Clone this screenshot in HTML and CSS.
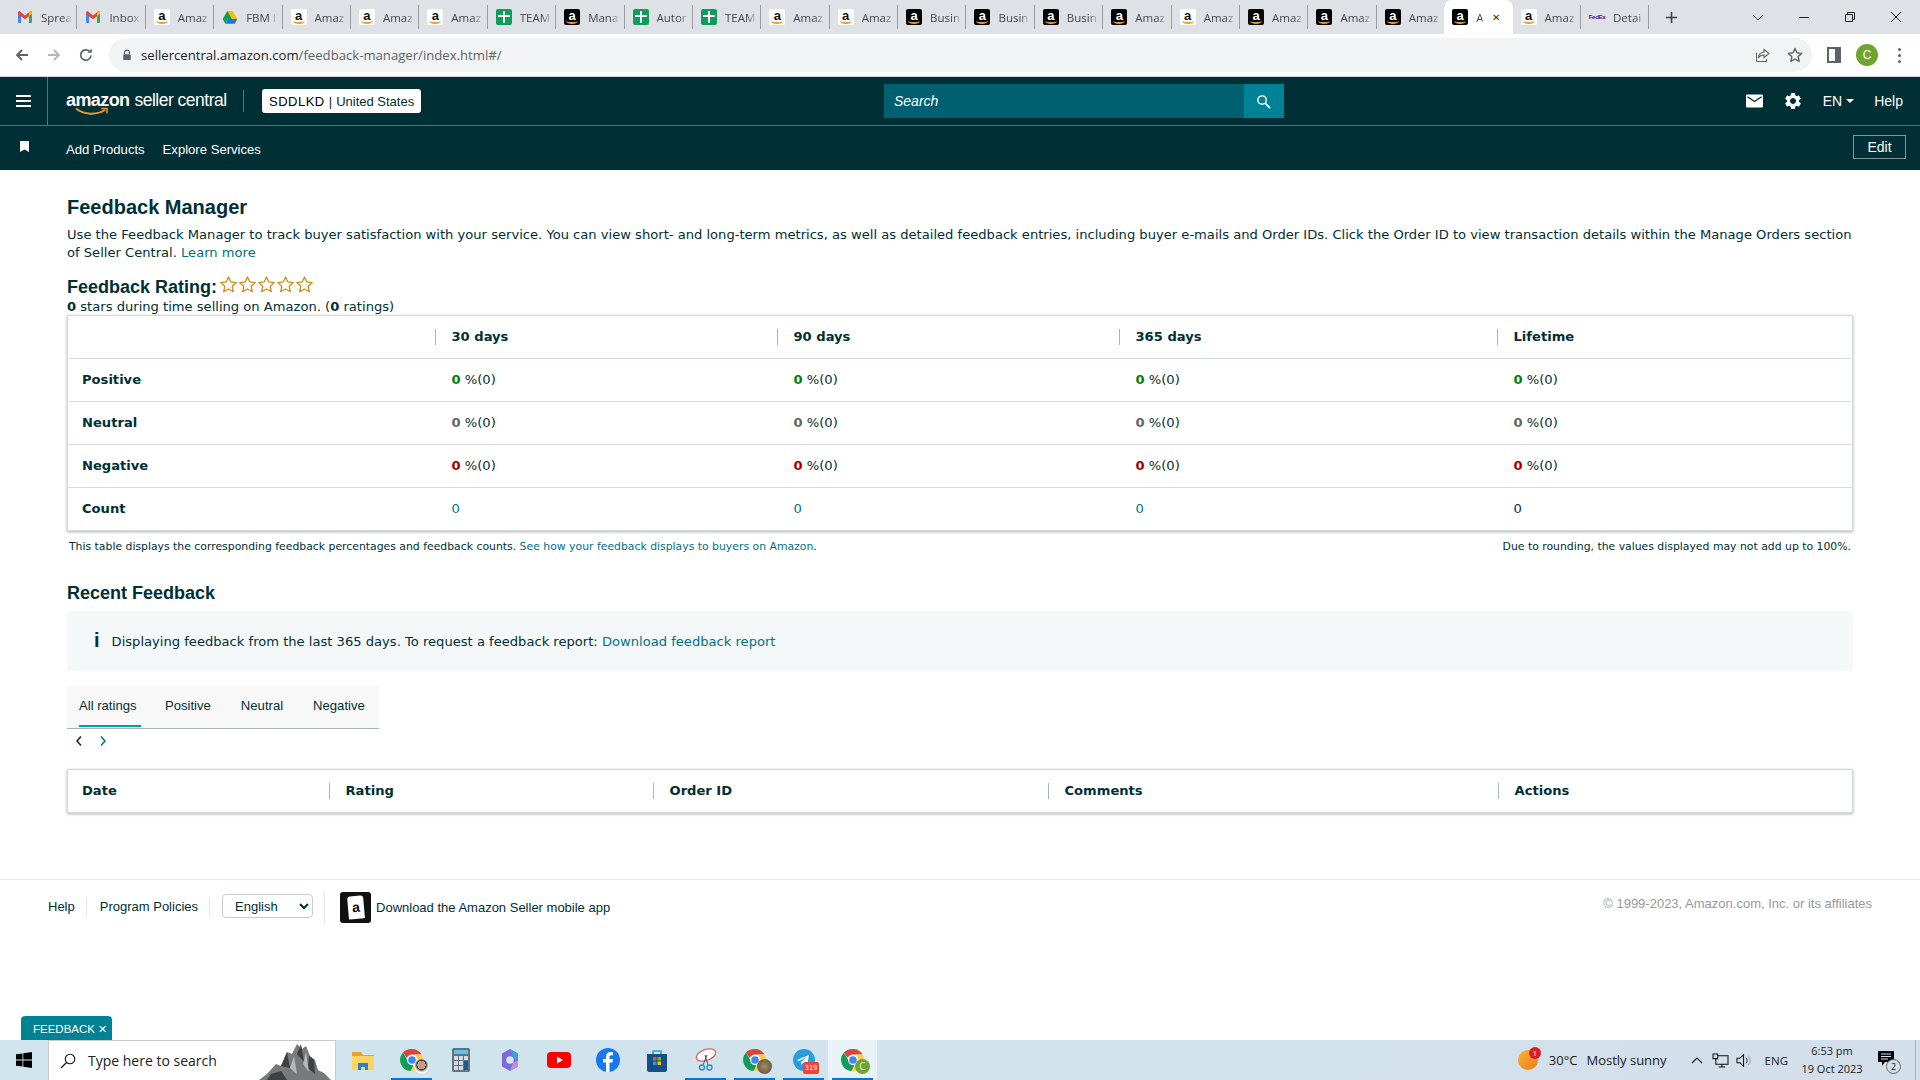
FILE: index.html
```html
<!DOCTYPE html>
<html lang="en">
<head>
  <meta charset="UTF-8">
  <title>Feedback Manager</title>
  <link rel="stylesheet" href="styles.css">
</head>
<body>
  <svg class="sprite" xmlns="http://www.w3.org/2000/svg">
    <symbol id="star" viewBox="0 0 24 24"><path d="M12 2.5l2.9 6.3 6.9.8-5.1 4.7 1.4 6.8-6.1-3.4-6.1 3.4 1.4-6.8-5.1-4.7 6.9-.8z" fill="#fff" stroke="#d08a14" stroke-width="1.6" stroke-linejoin="round"/></symbol>
    <symbol id="gear" viewBox="0 0 24 24"><path fill="#fff" d="M19.14 12.94c.04-.3.06-.61.06-.94 0-.32-.02-.64-.07-.94l2.03-1.58a.49.49 0 0 0 .12-.61l-1.92-3.32a.488.488 0 0 0-.59-.22l-2.39.96c-.5-.38-1.03-.7-1.62-.94l-.36-2.54a.484.484 0 0 0-.48-.41h-3.84c-.24 0-.43.17-.47.41l-.36 2.54c-.59.24-1.13.57-1.62.94l-2.39-.96c-.22-.08-.47 0-.59.22L2.74 8.87c-.12.21-.08.47.12.61l2.03 1.58c-.05.3-.09.63-.09.94s.02.64.07.94l-2.03 1.58a.49.49 0 0 0-.12.61l1.92 3.32c.12.22.37.29.59.22l2.39-.96c.5.38 1.03.7 1.62.94l.36 2.54c.05.24.24.41.48.41h3.84c.24 0 .44-.17.47-.41l.36-2.54c.59-.24 1.13-.56 1.62-.94l2.39.96c.22.08.47 0 .59-.22l1.92-3.32c.12-.22.07-.47-.12-.61l-2.01-1.58zM12 15.6c-1.98 0-3.6-1.62-3.6-3.6s1.62-3.6 3.6-3.6 3.6 1.62 3.6 3.6-1.62 3.6-3.6 3.6z"/></symbol>
    <symbol id="chrome" viewBox="0 0 24 24">
      <path fill="#db4437" d="M12 1a11 11 0 0 1 9.5 5.5H12A5.5 5.5 0 0 0 6.8 10L3 4.6A11 11 0 0 1 12 1z"/>
      <path fill="#0f9d58" d="M3 4.6L7.7 13a5.5 5.5 0 0 0 5.8 4.3L10.600 23A11 11 0 0 1 3 4.600z"/>
      <path fill="#ffcd40" d="M21.500 6.500A11 11 0 0 1 10.600 23l4.200-6.300A5.500 5.500 0 0 0 16.500 9.200 5 5 0 0 0 15 6.500z"/>
      <circle cx="12" cy="12" r="4.400" fill="#4285f4" stroke="#fff" stroke-width="1.200"/>
    </symbol>
    <symbol id="gmail" viewBox="0 0 16 16">
      <path fill="#4285f4" d="M1 3.500h3V14H2a1 1 0 0 1-1-1z"/>
      <path fill="#34a853" d="M12 3.500h3V13a1 1 0 0 1-1 1h-2z"/>
      <path fill="#ea4335" d="M1 3.500c0-1 1-1.500 2-1l5 4 5-4c1-.5 2 0 2 1v1.500l-7 5.200L1 5z"/>
      <path fill="#fbbc04" d="M12 3.700l1-.9c1-.6 2-.2 2 .9V5l-3 2.300z"/>
    </symbol>
  </svg>

  <div class="tabstrip">
    <div class="tab"><svg class="fav"><use href="#gmail"/></svg><span class="tab-title">Sprea</span></div>
    <div class="tab"><svg class="fav"><use href="#gmail"/></svg><span class="tab-title">Inbox</span></div>
    <div class="tab"><span class="fav fav-amz">a</span><span class="tab-title">Amaz</span></div>
    <div class="tab">
      <svg class="fav" viewBox="0 0 24 24"><path fill="#fbbc04" d="M8 3h8l7 12h-8z"/><path fill="#1a73e8" d="M23 15l-4 7H5l4-7z"/><path fill="#0f9d58" d="M8 3l7 12-6 0-4 7-4-7z"/></svg>
      <span class="tab-title">FBM I</span>
    </div>
    <div class="tab"><span class="fav fav-amz">a</span><span class="tab-title">Amaz</span></div>
    <div class="tab"><span class="fav fav-amz">a</span><span class="tab-title">Amaz</span></div>
    <div class="tab"><span class="fav fav-amz">a</span><span class="tab-title">Amaz</span></div>
    <div class="tab"><span class="fav fav-team"></span><span class="tab-title">TEAM</span></div>
    <div class="tab"><span class="fav fav-amz-dark">a</span><span class="tab-title">Mana</span></div>
    <div class="tab"><span class="fav fav-team"></span><span class="tab-title">Autor</span></div>
    <div class="tab"><span class="fav fav-team"></span><span class="tab-title">TEAM</span></div>
    <div class="tab"><span class="fav fav-amz">a</span><span class="tab-title">Amaz</span></div>
    <div class="tab"><span class="fav fav-amz">a</span><span class="tab-title">Amaz</span></div>
    <div class="tab"><span class="fav fav-amz-dark">a</span><span class="tab-title">Busin</span></div>
    <div class="tab"><span class="fav fav-amz-dark">a</span><span class="tab-title">Busin</span></div>
    <div class="tab"><span class="fav fav-amz-dark">a</span><span class="tab-title">Busin</span></div>
    <div class="tab"><span class="fav fav-amz-dark">a</span><span class="tab-title">Amaz</span></div>
    <div class="tab"><span class="fav fav-amz">a</span><span class="tab-title">Amaz</span></div>
    <div class="tab"><span class="fav fav-amz-dark">a</span><span class="tab-title">Amaz</span></div>
    <div class="tab"><span class="fav fav-amz-dark">a</span><span class="tab-title">Amaz</span></div>
    <div class="tab"><span class="fav fav-amz-dark">a</span><span class="tab-title">Amaz</span></div>
    <div class="tab tab-active"><span class="fav fav-amz-dark">a</span><span class="tab-title">A</span><span class="tab-close">✕</span></div>
    <div class="tab"><span class="fav fav-amz">a</span><span class="tab-title">Amaz</span></div>
    <div class="tab"><span class="fav fav-fedex">FedEx</span><span class="tab-title">Detai</span></div>
    <svg class="newtab" viewBox="0 0 14 14"><path d="M7 1v12M1 7h12" stroke="#3c4043" stroke-width="1.700"/></svg>
    <div class="winctl">
      <svg viewBox="0 0 12 12"><path d="M1 4l5 5 5-5" fill="none" stroke="#444" stroke-width="1"/></svg>
      <svg viewBox="0 0 12 12"><path d="M1 6.500h10" stroke="#222" stroke-width="1"/></svg>
      <svg viewBox="0 0 12 12"><path d="M1.500 3.500h7v7h-7zM3.500 3.500v-2h7v7h-2" fill="none" stroke="#222" stroke-width="1"/></svg>
      <svg viewBox="0 0 12 12"><path d="M1 1l10 10M11 1L1 11" stroke="#222" stroke-width="1"/></svg>
    </div>
  </div>

  <div class="toolbar">
    <svg class="tool" viewBox="0 0 16 16"><path d="M14 8H3M8 3L3 8l5 5" fill="none" stroke="#5f6368" stroke-width="1.800"/></svg>
    <svg class="tool" viewBox="0 0 16 16"><path d="M2 8h11M8 3l5 5-5 5" fill="none" stroke="#b4b7bb" stroke-width="1.800"/></svg>
    <svg class="tool" viewBox="0 0 16 16"><path d="M13 8.500A5.200 5.200 0 1 1 11.500 4.300" fill="none" stroke="#5f6368" stroke-width="1.700"/><path d="M9.500 5.700h4.300V1.400z" fill="#5f6368"/></svg>
    <div class="omnibox">
      <svg class="lock" viewBox="0 0 12 14"><path d="M3 6V4.200a3 3 0 0 1 6 0V6" fill="none" stroke="#5f6368" stroke-width="1.400"/><rect x="1.500" y="6" width="9" height="7" rx="1" fill="#5f6368"/></svg>
      <span class="url">sellercentral.amazon.com<span class="url-path">/feedback-manager/index.html#/</span></span>
      <span class="omni-icons">
        <svg viewBox="0 0 16 16"><path d="M9 2.500l5 4-5 4V8C6 8 4.500 9 3.300 11 3.500 7.500 5.500 5.500 9 5z" fill="none" stroke="#5f6368" stroke-width="1.100"/><path d="M1.500 6v8.500h10V12" fill="none" stroke="#5f6368" stroke-width="1"/></svg>
        <svg viewBox="0 0 16 16"><path d="M8 1.500l2 4.300 4.600.6-3.400 3.200.9 4.700L8 12l-4.100 2.300.9-4.700L1.400 6.400 6 5.800z" fill="none" stroke="#5f6368" stroke-width="1.400" stroke-linejoin="round"/></svg>
      </span>
    </div>
    <span class="panel-icon"></span>
    <span class="avatar">C</span>
    <span class="kebab"><i></i><i></i><i></i></span>
  </div>

  <header class="sc-header">
    <div class="burger"><i></i><i></i><i></i></div>
    <div class="logo">
      <span class="logo-amazon">amazon</span><span class="logo-seller">seller central</span>
      <svg class="logo-smile" viewBox="0 0 34 9"><path d="M1 1.500C9 8 22 8.500 31 3" fill="none" stroke="#f29a2e" stroke-width="2"/><path d="M27 1.500h6v5" fill="none" stroke="#f29a2e" stroke-width="1.500"/></svg>
    </div>
    <div class="account"><b>SDDLKD</b><span class="account-sep">|</span>United States</div>
    <div class="search">
      <span class="search-input">Search</span>
      <span class="search-btn"><svg viewBox="0 0 16 16"><circle cx="6.500" cy="6.500" r="4.500" fill="none" stroke="#fff" stroke-width="1.500"/><path d="M10 10l5 5" stroke="#fff" stroke-width="1.800"/></svg></span>
    </div>
    <div class="header-right">
      <svg class="mail" viewBox="0 0 18 14"><rect width="18" height="14" rx="1.500" fill="#fff"/><path d="M1.500 2.500L9 7.500l7.500-5" fill="none" stroke="#002f36" stroke-width="1.500"/></svg>
      <svg class="gear"><use href="#gear"/></svg>
      <span class="lang">EN<i class="caret"></i></span>
      <span>Help</span>
    </div>
  </header>

  <nav class="sc-nav">
    <svg class="bookmark" viewBox="0 0 9 11"><path d="M0 0h9v11L4.500 8.500 0 11z" fill="#fff"/></svg>
    <a class="nav-link">Add Products</a>
    <a class="nav-link">Explore Services</a>
    <span class="edit-btn">Edit</span>
  </nav>

  <main class="content">
    <h1 class="page-title">Feedback Manager</h1>
    <p class="intro">Use the Feedback Manager to track buyer satisfaction with your service. You can view short- and long-term metrics, as well as detailed feedback entries, including buyer e-mails and Order IDs. Click the Order ID to view transaction details within the Manage Orders section of Seller Central. <a class="link">Learn more</a></p>

    <div class="rating-head">
      <h2 class="section-title">Feedback Rating:</h2>
      <span class="stars">
        <svg><use href="#star"/></svg><svg><use href="#star"/></svg><svg><use href="#star"/></svg><svg><use href="#star"/></svg><svg><use href="#star"/></svg>
      </span>
    </div>
    <p class="rating-sub"><b>0</b> stars during time selling on Amazon. (<b>0</b> ratings)</p>

    <table class="data-table summary">
      <colgroup><col class="s1"><col class="s2"><col class="s3"><col class="s4"><col></colgroup>
      <thead>
        <tr><th></th><th><span>30 days</span></th><th><span>90 days</span></th><th><span>365 days</span></th><th><span>Lifetime</span></th></tr>
      </thead>
      <tbody>
        <tr><th>Positive</th><td><b class="pos">0</b> %(0)</td><td><b class="pos">0</b> %(0)</td><td><b class="pos">0</b> %(0)</td><td><b class="pos">0</b> %(0)</td></tr>
        <tr><th>Neutral</th><td><b class="neu">0</b> %(0)</td><td><b class="neu">0</b> %(0)</td><td><b class="neu">0</b> %(0)</td><td><b class="neu">0</b> %(0)</td></tr>
        <tr><th>Negative</th><td><b class="neg">0</b> %(0)</td><td><b class="neg">0</b> %(0)</td><td><b class="neg">0</b> %(0)</td><td><b class="neg">0</b> %(0)</td></tr>
        <tr><th>Count</th><td><a class="link">0</a></td><td><a class="link">0</a></td><td><a class="link">0</a></td><td>0</td></tr>
      </tbody>
    </table>

    <div class="table-notes">
      <span>This table displays the corresponding feedback percentages and feedback counts. <a class="link">See how your feedback displays to buyers on Amazon</a>.</span>
      <span>Due to rounding, the values displayed may not add up to 100%.</span>
    </div>

    <h2 class="section-title recent-title">Recent Feedback</h2>
    <div class="info-box">
      <span class="info-i">i</span>
      <span>Displaying feedback from the last 365 days. To request a feedback report: <a class="link">Download feedback report</a></span>
    </div>

    <div class="rating-tabs">
      <span class="rating-tab rating-tab-on">All ratings</span>
      <span class="rating-tab">Positive</span>
      <span class="rating-tab">Neutral</span>
      <span class="rating-tab">Negative</span>
    </div>
    <div class="pager">
      <svg viewBox="0 0 8 12"><path d="M6 1.500L2 6l4 4.500" fill="none" stroke="#002f36" stroke-width="1.500"/></svg>
      <svg viewBox="0 0 8 12"><path d="M2 1.500L6 6l-4 4.500" fill="none" stroke="#007185" stroke-width="1.500"/></svg>
    </div>

    <table class="data-table recent">
      <colgroup><col class="r1"><col class="r2"><col class="r3"><col class="r4"><col></colgroup>
      <thead>
        <tr><th>Date</th><th><span>Rating</span></th><th><span>Order ID</span></th><th><span>Comments</span></th><th><span>Actions</span></th></tr>
      </thead>
    </table>
  </main>

  <footer class="sc-footer">
    <a class="foot-link">Help</a>
    <a class="foot-link">Program Policies</a>
    <select class="foot-lang"><option>English</option></select>
    <div class="foot-app">
      <span class="app-icon"><span class="app-tag">a</span></span>
      <span>Download the Amazon Seller mobile app</span>
    </div>
    <span class="copyright">© 1999-2023, Amazon.com, Inc. or its affiliates</span>
  </footer>

  <div class="feedback-tab">FEEDBACK <span class="feedback-x">✕</span></div>

  <div class="taskbar">
    <svg class="start" viewBox="0 0 16 16"><path fill="#000" d="M0 2.300l6.500-.9v6.200H0zM7.300 1.300L16 0v7.600H7.300zM0 8.400h6.500v6.200L0 13.700zM7.300 8.400H16V16l-8.700-1.300z"/></svg>
    <div class="tb-search">
      <svg viewBox="0 0 16 16"><circle cx="10" cy="6" r="4.800" fill="none" stroke="#111" stroke-width="1.100"/><path d="M6.500 9.500L1 15" stroke="#111" stroke-width="1.200"/></svg>
      <span>Type here to search</span>
      <svg class="rock" viewBox="0 0 76 40"><path fill="#77797b" d="M0 40l8-6 9-10 5 2 6-14 5 2 5-10 5 5 4-3 4 10 5 4 3 10 6 3 7 7z"/><path fill="#3e4042" d="M22 26l6-14 3 16zM38 14l4-10 3 18zM50 16l5 4 1 14-7-6zM12 34l10-3 6 9H8z"/><path fill="#b5b7b9" d="M31 28l4-12 3 18zM44 24l3-12 3 20z"/></svg>
    </div>
    <div class="tb-apps">
      <span class="tb-app">
        <svg viewBox="0 0 24 24"><path fill="#e0a52b" d="M1 4h9l2 3h11v3H1z"/><path fill="#fcd462" d="M1 8h22v14H1z"/><path fill="#2d7fc9" d="M7 22v-7h10v7h-3v-3h-4v3z"/></svg>
      </span>
      <span class="tb-app tb-open"><svg><use href="#chrome"/></svg><i class="tb-badge tb-badge-face"></i></span>
      <span class="tb-app">
        <svg viewBox="0 0 24 24"><rect x="3" width="18" height="24" rx="1.500" fill="#66727e"/><rect x="5" y="2" width="14" height="4" fill="#5cc6ea"/><path d="M5 8h4v4H5zM10 8h4v4h-4zM15 8h4v4h-4zM5 13h4v4H5zM10 13h4v4h-4zM5 18h4v4H5zM10 18h4v4h-4z" fill="#d4dbe0"/><path d="M15 13h4v9h-4z" fill="#1c5a94"/></svg>
      </span>
      <span class="tb-app">
        <svg viewBox="0 0 24 24"><path fill="#7a6bd8" d="M12 1l8 4.500v13L12 23l-8-4.500v-13z"/><path fill="#3aa0e0" d="M12 1l8 4.500v6l-5-2z"/><path fill="#c08be0" d="M12 23l8-4.500v-6l-5 2z"/><circle cx="12" cy="12" r="3.800" fill="#d3e5ee"/></svg>
      </span>
      <span class="tb-app">
        <svg viewBox="0 0 24 24"><rect y="4" width="24" height="16" rx="4" fill="#f00"/><path d="M10 8.500l6 3.500-6 3.500z" fill="#fff"/></svg>
      </span>
      <span class="tb-app">
        <svg viewBox="0 0 24 24"><circle cx="12" cy="12" r="12" fill="#1778f2"/><path fill="#fff" d="M13.500 24v-9.500h3l.5-3.500h-3.500V9c0-1 .4-1.800 1.900-1.800H17V4.200c-.5-.1-1.500-.2-2.500-.2-2.700 0-4.500 1.600-4.500 4.500V11H7v3.500h3V24z"/></svg>
      </span>
      <span class="tb-app">
        <svg viewBox="0 0 24 24"><path fill="none" stroke="#27a4d8" stroke-width="1.600" d="M8 6V3h8v3"/><path fill="#144f88" d="M2 6h20v16a2 2 0 0 1-2 2H4a2 2 0 0 1-2-2z"/><path fill="#f25022" d="M8 9h3.500v3.500H8z"/><path fill="#7fba00" d="M12.500 9H16v3.500h-3.500z"/><path fill="#00a4ef" d="M8 13.500h3.500V17H8z"/><path fill="#ffb900" d="M12.500 13.500H16V17h-3.500z"/></svg>
      </span>
      <span class="tb-app tb-open">
        <svg viewBox="0 0 24 24"><ellipse cx="12" cy="7" rx="10" ry="5.500" fill="#fff" stroke="#e8606a" stroke-width="1.300" transform="rotate(-20 12 7)"/><path d="M11 7l3 10M13 7l-4 10" stroke="#555" stroke-width="1"/><circle cx="8" cy="19.500" r="2.500" fill="none" stroke="#2f8fd0" stroke-width="1.400"/><circle cx="15.500" cy="19.500" r="2.500" fill="none" stroke="#2f8fd0" stroke-width="1.400"/></svg>
      </span>
      <span class="tb-app tb-open"><svg><use href="#chrome"/></svg><i class="tb-badge tb-badge-photo"></i></span>
      <span class="tb-app tb-open">
        <svg viewBox="0 0 24 24"><circle cx="12" cy="12" r="11" fill="#279fd9"/><path fill="#fff" d="M5 12l12-5-2 11-4-3-2 2v-3l6-5-8 4z"/></svg>
        <i class="tb-count">319</i>
      </span>
      <span class="tb-app tb-open tb-current"><svg><use href="#chrome"/></svg><i class="tb-badge tb-badge-c">C</i></span>
    </div>
    <div class="tray">
      <span class="weather"><i class="weather-dot">1</i></span>
      <span class="tray-temp">30°C</span>
      <span class="tray-sky">Mostly sunny</span>
      <svg class="tray-chev" viewBox="0 0 12 8"><path d="M1 7l5-5 5 5" fill="none" stroke="#111" stroke-width="1.100"/></svg>
      <svg class="tray-net" viewBox="0 0 18 16"><path d="M1 1h5v5H1zM6 3h11v9H4V6M10.500 12v3M7 15h7" fill="none" stroke="#111" stroke-width="1.100"/></svg>
      <svg class="tray-vol" viewBox="0 0 18 16"><path d="M1 5.500h3L8 2v12L4 10.500H1z" fill="none" stroke="#111" stroke-width="1.100"/><path d="M10.500 5a4 4 0 0 1 0 6" fill="none" stroke="#111" stroke-width="1"/><path d="M13 3a7 7 0 0 1 0 10" fill="none" stroke="#999" stroke-width="1"/></svg>
      <span class="tray-lang">ENG</span>
      <span class="clock">6:53 pm<br>19 Oct 2023</span>
      <span class="notify">
        <svg viewBox="0 0 16 15"><path d="M0 0h16v11H7l-3 4v-4H0z" fill="#000"/><path d="M3 3h10M3 5.500h10M3 8h7" stroke="#d3dfeb" stroke-width="1"/></svg>
        <i class="notify-count">2</i>
      </span>
    </div>
  </div>
</body>
</html>
```

FILE: styles.css
```css
:root {
  --dark: #002f36;
  --link: #007185;
  --teal: #008296;
  --line: #d5dbdb;
}

* {
  box-sizing: border-box;
}

html, body {
  height: 100%;
}

body {
  margin: 0;
  height: 1080px;
  overflow: hidden;
  display: flex;
  flex-direction: column;
  position: relative;
  font-family: "DejaVu Sans", sans-serif;
  font-size: 13.100px;
  color: var(--dark);
  background: #fff;
}

.sprite {
  display: none;
}

/* browser chrome */
.tabstrip {
  height: 34px;
  flex: none;
  display: flex;
  align-items: center;
  padding-left: 9px;
  background: #dee1e6;
  font-family: "Open Sans", sans-serif;
  font-size: 11.500px;
  color: #45494e;
}

.tab {
  width: 68.400px;
  height: 24px;
  flex: none;
  display: flex;
  align-items: center;
  gap: 8px;
  padding-left: 8px;
  border-right: 1px solid #9a9da1;
  overflow: hidden;
}

.tab-active {
  height: 34px;
  margin-left: -1px;
  border: 0;
  background: #fff;
  border-radius: 8px 8px 0 0;
  position: relative;
}

.tab-title {
  width: 32px;
  flex: none;
  overflow: hidden;
  white-space: nowrap;
  -webkit-mask-image: linear-gradient(90deg, #000 70%, transparent);
  mask-image: linear-gradient(90deg, #000 70%, transparent);
}

.tab-active .tab-title {
  width: 8px;
}

.tab-close {
  font-size: 10px;
  color: #333;
}

.fav {
  width: 16px;
  height: 16px;
  flex: none;
  display: flex;
  align-items: flex-start;
  justify-content: center;
  font-family: "Liberation Sans", sans-serif;
  font-weight: 700;
  font-size: 13px;
  line-height: 13px;
  position: relative;
}

.fav-amz, .fav-amz-dark {
  border-radius: 2px;
}

.fav-amz {
  background: #fff;
  color: #111;
}

.fav-amz-dark {
  background: #000;
  color: #fff;
}

.fav-amz::after, .fav-amz-dark::after {
  content: "";
  position: absolute;
  left: 2px;
  right: 2px;
  bottom: 1px;
  height: 4px;
  border-bottom: 2px solid #f09a21;
  border-radius: 0 0 50% 50%;
}

.fav-team {
  background: linear-gradient(#fff, #fff) center 6px / 12px 2px no-repeat,
    linear-gradient(#fff, #fff) center 2px / 2px 12px no-repeat,
    #0f9d58;
  border-radius: 2px;
}

.fav-fedex {
  font-size: 6px;
  line-height: 16px;
  letter-spacing: -.3px;
  color: #4d148c;
}

.newtab {
  width: 13px;
  height: 13px;
  margin-left: 16px;
}

.winctl {
  margin-left: auto;
  height: 100%;
  display: flex;
  align-items: flex-start;
  gap: 34px;
  padding: 11px 18px 0 0;
}

.winctl svg {
  width: 12px;
  height: 12px;
}

.toolbar {
  height: 43px;
  flex: none;
  display: flex;
  align-items: center;
  padding-left: 14px;
  background: #fff;
  border-bottom: 1px solid #d5d7da;
}

.tool {
  width: 16px;
  height: 16px;
  margin-right: 16px;
}

.omnibox {
  width: 1703px;
  height: 34px;
  margin-left: -1px;
  display: flex;
  align-items: center;
  padding: 0 9px 0 13px;
  background: #f1f3f4;
  border-radius: 17px;
  font-family: "Open Sans", sans-serif;
  font-size: 13.150px;
}

.lock {
  width: 10px;
  height: 12px;
  margin-right: 9px;
}

.url {
  color: #202124;
}

.url-path {
  color: #5f6368;
}

.omni-icons {
  margin-left: auto;
  display: flex;
  gap: 16px;
}

.omni-icons svg {
  width: 16px;
  height: 16px;
}

.panel-icon {
  width: 14px;
  height: 16px;
  margin-left: 15px;
  border: 2px solid #5f6368;
  border-right-width: 6px;
}

.avatar {
  width: 22px;
  height: 22px;
  margin-left: 15px;
  border-radius: 50%;
  background: #6da52f;
  color: #fff;
  font-family: "Liberation Sans", sans-serif;
  font-size: 12px;
  display: flex;
  align-items: center;
  justify-content: center;
}

.kebab {
  margin-left: 20px;
  display: flex;
  flex-direction: column;
  gap: 3px;
}

.kebab i {
  width: 3px;
  height: 3px;
  border-radius: 50%;
  background: #5f6368;
}

/* seller central header */
.sc-header, .sc-nav {
  flex: none;
  display: flex;
  align-items: center;
  background: var(--dark);
  color: #fff;
  font-family: "Liberation Sans", sans-serif;
}

.sc-header {
  height: 49px;
  border-bottom: 1px solid #54757b;
  font-size: 14px;
}

.burger {
  width: 48px;
  height: 100%;
  display: flex;
  flex-direction: column;
  justify-content: center;
  gap: 3px;
  padding-left: 16px;
  border-right: 1px solid #54757b;
}

.burger i {
  width: 15px;
  height: 2px;
  background: #fff;
}

.logo {
  width: 178px;
  margin-left: 18px;
  height: 22px;
  display: flex;
  align-items: baseline;
  gap: 5px;
  position: relative;
  border-right: 1px solid #54757b;
  margin-top: -1px;
  line-height: 20px;
  white-space: nowrap;
}

.logo-amazon {
  font-weight: 700;
  font-size: 18px;
  letter-spacing: -.6px;
}

.logo-seller {
  font-size: 17.500px;
  letter-spacing: -.5px;
  font-weight: 400;
}

.logo-smile {
  position: absolute;
  left: 9px;
  top: 17px;
  width: 33px;
  height: 9px;
}

.account {
  width: 159px;
  height: 24px;
  margin-left: 18px;
  padding: 0 7px;
  display: flex;
  align-items: center;
  background: #fff;
  border-radius: 3px;
  color: var(--dark);
  font-size: 13px;
  white-space: nowrap;
}

.account b {
  font-weight: 400;
  color: #000;
  letter-spacing: .5px;
}

.account-sep {
  margin: 0 4px;
}

.search {
  width: 400px;
  height: 34px;
  margin-left: 463px;
  display: flex;
}

.search-input {
  flex: 1;
  padding-left: 10px;
  background: #006070;
  font-style: italic;
  font-size: 14px;
  line-height: 34px;
}

.search-btn {
  width: 40px;
  background: var(--teal);
  display: flex;
  align-items: center;
  justify-content: center;
}

.search-btn svg {
  width: 15px;
  height: 15px;
  margin-left: -2px;
}

.header-right {
  margin-left: auto;
  padding-right: 17px;
  display: flex;
  align-items: center;
  gap: 20px;
}

.mail {
  width: 17px;
  height: 14px;
}

.gear {
  width: 20px;
  height: 20px;
}

.lang {
  display: flex;
  align-items: center;
  gap: 4px;
}

.caret {
  width: 0;
  height: 0;
  border: 4px solid transparent;
  border-top: 4px solid #fff;
  border-bottom: 0;
}

.sc-nav {
  height: 44px;
  font-size: 13.100px;
  padding: 2px 14px 0 20px;
}

.bookmark {
  width: 9px;
  height: 11px;
  margin: -5px 37px 0 0;
}

.nav-link {
  margin-right: 18px;
}

.edit-btn {
  margin: -4px 0 0 auto;
  width: 53px;
  height: 24px;
  border: 1px solid #7f9599;
  text-align: center;
  line-height: 22px;
  font-size: 14px;
}

/* page content */
.content {
  flex: none;
  height: 709px;
  padding: 25px 67px 0;
}

.page-title, .section-title {
  margin: 0;
  font-family: "Liberation Sans", sans-serif;
  font-weight: 700;
  color: var(--dark);
}

.page-title {
  font-size: 20px;
  line-height: 24px;
}

.intro {
  margin: 7px 0 0;
  line-height: 18px;
}

.link {
  color: var(--link);
}

.rating-head {
  margin-top: 13px;
  display: flex;
  align-items: center;
  height: 24px;
}

.section-title {
  font-size: 18px;
  line-height: 24px;
}

.stars {
  display: flex;
  margin: -5px 0 0 2px;
}

.stars svg {
  width: 19px;
  height: 19px;
}

.rating-sub {
  margin: 0;
  line-height: 16px;
}

.data-table {
  width: 100%;
  margin-top: 0;
  table-layout: fixed;
  border-collapse: collapse;
  border: 1px solid var(--line);
  box-shadow: 0 1px 3px rgba(0, 0, 0, .3);
  font-size: 13.100px;
}

.data-table tr {
  height: 43px;
  border-bottom: 1px solid var(--line);
}

.data-table tbody tr:last-child, .recent tr {
  border-bottom: 0;
}

.data-table th, .data-table td {
  padding: 0;
  text-align: left;
  vertical-align: middle;
  line-height: 16px;
}

.data-table th {
  font-weight: 700;
  color: var(--dark);
  padding-left: 14px;
}

.data-table thead th:not(:first-child) {
  padding-left: 0;
}

.data-table thead th span {
  display: block;
  padding-left: 16px;
  line-height: 16px;
  border-left: 1px solid #aab5b7;
}

.data-table td {
  padding-left: 17px;
}

.s1 { width: 367px; }
.s2, .s3 { width: 342px; }
.s4 { width: 378px; }
.r1 { width: 261px; }
.r2 { width: 324px; }
.r3 { width: 395px; }
.r4 { width: 450px; }

.pos { color: #067d06; }
.neu { color: #666; }
.neg { color: #a30000; }

.table-notes {
  margin-top: 9px;
  padding: 0 2px;
  display: flex;
  justify-content: space-between;
  font-size: 10.850px;
  line-height: 14px;
}

.recent-title {
  margin-top: 27px;
}

.info-box {
  height: 60px;
  margin-top: 6px;
  padding-left: 27px;
  display: flex;
  align-items: center;
  gap: 12px;
  background: #f5f8f9;
}

.info-i {
  font-family: "Liberation Sans", sans-serif;
  font-weight: 700;
  font-size: 20px;
  color: var(--dark);
  margin-top: -2px;
}

.rating-tabs {
  width: 312px;
  height: 43px;
  margin-top: 15px;
  display: flex;
  padding-left: 12px;
  gap: 30px;
  background: #f8f8f8;
  border-bottom: 1px solid #aab5b7;
  font-family: "Liberation Sans", sans-serif;
  font-size: 13.100px;
}

.rating-tab {
  line-height: 27px;
  padding-top: 6px;
  height: 41px;
}

.rating-tab-on {
  width: 62px;
  margin-right: -6px;
  white-space: nowrap;
  border-bottom: 2px solid #00a0b0;
}

.pager {
  height: 12px;
  margin-top: 6px;
  padding-left: 8px;
  display: flex;
  gap: 16px;
}

.pager svg {
  width: 8px;
  height: 12px;
}

.recent {
  margin-top: 22px;
}

/* footer */
.sc-footer {
  flex: 1;
  display: flex;
  align-items: flex-start;
  padding: 13px 48px 0;
  border-top: 1px solid #e7e9ec;
  font-family: "Liberation Sans", sans-serif;
  font-size: 13px;
}

.foot-link {
  margin-top: 5px;
  padding: 0 11px 0 0;
  margin-right: 13px;
  line-height: 18px;
  border-right: 1px solid #e3e6e6;
}

.foot-lang {
  width: 91px;
  height: 24px;
  margin: 1px 0 0 -1px;
  padding-left: 8px;
  background: #fff;
  border: 1px solid #c8cccc;
  border-radius: 4px;
  font: inherit;
  color: var(--dark);
}

.foot-app {
  margin: -1px 0 0 11px;
  padding-left: 15px;
  height: 31px;
  display: flex;
  align-items: center;
  gap: 5px;
  border-left: 1px solid #e3e6e6;
}

.app-icon {
  width: 31px;
  height: 31px;
  border-radius: 3px;
  background: #111;
  display: flex;
  align-items: center;
  justify-content: center;
}

.app-tag {
  width: 16px;
  height: 23px;
  background: #fff;
  color: #111;
  font-weight: 700;
  font-size: 14px;
  text-align: center;
  line-height: 22px;
  border-radius: 3px 3px 1px 1px;
  transform: rotate(-5deg);
}

.copyright {
  margin: 2px 0 0 auto;
  color: #999;
  line-height: 18px;
}

.feedback-tab {
  position: absolute;
  left: 21px;
  bottom: 40px;
  width: 91px;
  height: 24px;
  background: var(--teal);
  border-radius: 4px 4px 0 0;
  color: #fff;
  font-family: "Liberation Sans", sans-serif;
  font-size: 11.500px;
  line-height: 26px;
  padding-left: 12px;
}

.feedback-x {
  font-size: 11px;
}

/* windows taskbar */
.taskbar {
  height: 40px;
  flex: none;
  display: flex;
  align-items: center;
  background: linear-gradient(90deg, #d0e5ee, #d1e3ed 50%, #d3dfeb);
  font-family: "Open Sans", sans-serif;
}

.start {
  width: 16px;
  height: 16px;
  margin: 0 16px;
}

.tb-search {
  width: 288px;
  height: 40px;
  display: flex;
  align-items: center;
  gap: 12px;
  padding-left: 11px;
  background: #fff;
  border: 1px solid #c9c9c9;
  border-bottom: 0;
  font-size: 14px;
  color: #222;
  position: relative;
}

.tb-search > svg:first-child {
  width: 16px;
  height: 16px;
}

.rock {
  position: absolute;
  right: 0;
  bottom: 0;
  width: 76px;
  height: 40px;
}

.tb-apps {
  display: flex;
  margin-left: 2px;
}

.tb-app {
  width: 49px;
  height: 40px;
  display: flex;
  align-items: center;
  justify-content: center;
  position: relative;
}

.tb-app svg {
  width: 24px;
  height: 24px;
}

.tb-open::after {
  content: "";
  position: absolute;
  left: 4px;
  right: 4px;
  bottom: 0;
  height: 2px;
  background: #0078d7;
}

.tb-current {
  background: #e8f2f7;
}

.tb-badge {
  position: absolute;
  left: 27px;
  top: 19px;
  width: 15px;
  height: 15px;
  border-radius: 50%;
  font-style: normal;
}

.tb-badge-face {
  background: radial-gradient(circle at 50% 40%, #c99a7e 35%, #2b2420 37%, #f4f4f4 60%);
}

.tb-badge-photo {
  background: radial-gradient(circle at 50% 50%, #a98d5a, #4d4a3a);
}

.tb-badge-c {
  background: #6da52f;
  color: #e8f2d8;
  font-size: 10px;
  line-height: 15px;
  text-align: center;
}

.tb-count {
  position: absolute;
  left: 24px;
  top: 22px;
  width: 16px;
  height: 12px;
  background: #f44336;
  border-radius: 2px;
  color: #fff;
  font-family: "DejaVu Sans Mono", monospace;
  font-size: 7px;
  font-style: normal;
  line-height: 12px;
  text-align: center;
}

.tray {
  margin: 0 4px 0 auto;
  display: flex;
  align-items: center;
  height: 40px;
  padding-right: 13px;
  color: #1a1a1a;
  font-size: 13px;
  border-right: 1px solid #a8b4c0;
}

.weather {
  width: 20px;
  height: 20px;
  border-radius: 50%;
  background: linear-gradient(135deg, #f9b233, #ee7d1b);
  position: relative;
  margin-right: 11px;
}

.weather-dot {
  position: absolute;
  right: -3px;
  top: -3px;
  width: 12px;
  height: 12px;
  border-radius: 50%;
  background: #d92020;
  color: #fff;
  font-size: 8px;
  font-style: normal;
  line-height: 12px;
  text-align: center;
}

.tray-sky {
  margin-left: 9px;
}

.tray-chev {
  width: 12px;
  height: 8px;
  margin-left: 24px;
}

.tray-net {
  width: 17px;
  height: 15px;
  margin-left: 9px;
}

.tray-vol {
  width: 17px;
  height: 15px;
  margin-left: 7px;
}

.tray-lang {
  margin-left: 12px;
  font-size: 11.500px;
}

.clock {
  width: 62px;
  margin-left: 13px;
  text-align: center;
  font-size: 11px;
  line-height: 18px;
  white-space: nowrap;
}

.notify {
  width: 24px;
  height: 24px;
  margin-left: 15px;
  position: relative;
}

.notify svg {
  width: 16px;
  height: 15px;
  margin-top: 3px;
  display: block;
}

.notify-count {
  position: absolute;
  left: 8px;
  top: 11px;
  width: 15px;
  height: 15px;
  border-radius: 50%;
  background: #d3dfeb;
  border: 1px solid #666;
  font-size: 9px;
  font-style: normal;
  line-height: 13px;
  text-align: center;
}
```
